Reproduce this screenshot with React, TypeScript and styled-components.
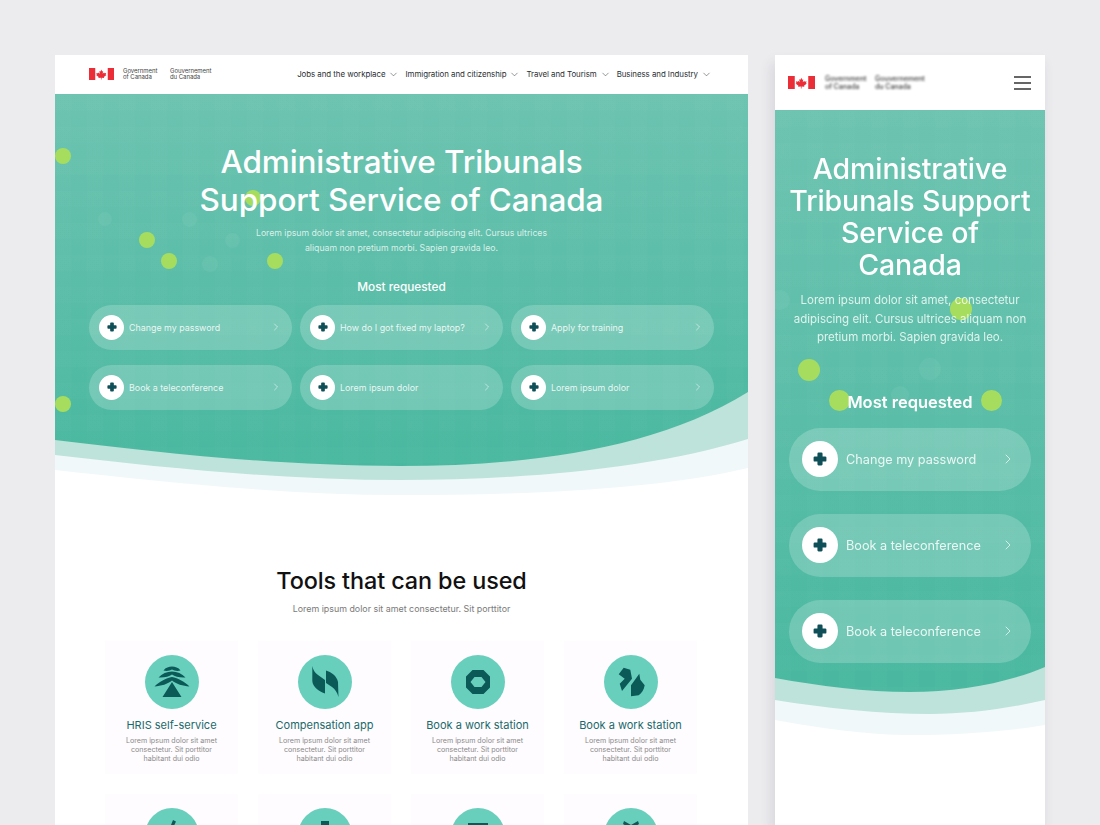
import styled, { createGlobalStyle } from "styled-components";
import { ChevronDown, ChevronRight } from "lucide-react";

const GlobalStyle = createGlobalStyle`
  html, body {
    margin: 0;
    height: 825px;
    overflow: hidden;
    background-color: #ecebee;
    font-family: Inter, "Liberation Sans", sans-serif;
  }
  * {
    box-sizing: border-box;
  }
`;

const Page = styled.div`
  display: flex;
  align-items: flex-start;
  gap: 27px;
  height: 825px;
  padding: 55px 0 0 55px;
  overflow: hidden;
`;

const DesktopFrame = styled.main`
  width: 693px;
  height: 770px;
  flex-shrink: 0;
  background-color: #fff;
  overflow: hidden;
`;

const MobileFrame = styled.aside`
  width: 270px;
  height: 770px;
  flex-shrink: 0;
  background-color: #fff;
  box-shadow: -3px 8px 12px rgba(60, 60, 70, 0.12);
  overflow: hidden;
`;

const Header = styled.header`
  display: flex;
  align-items: center;
  justify-content: space-between;
  height: 39px;
  padding: 0 36px 1px 34px;
  background-color: #fff;
`;

const MobileHeader = styled(Header)`
  height: 55px;
  padding: 0 14px 0 13px;
`;

const Brand = styled.div`
  display: flex;
  align-items: center;
`;

const FlagBox = styled.svg<{ $width: number }>`
  width: ${(p) => p.$width}px;
  height: ${(p) => p.$width / 2}px;
  flex-shrink: 0;
`;

const BrandText = styled.span`
  display: block;
  width: 47px;
  font-size: 6px;
  line-height: 6.4px;
  letter-spacing: -0.05px;
  color: #444;
  &:first-of-type {
    margin-left: 9px;
  }
`;

const MobileBrandText = styled(BrandText)`
  width: 50px;
  font-size: 7px;
  line-height: 8px;
  font-weight: 600;
  color: #555;
  filter: blur(0.8px);
  &:first-of-type {
    margin-left: 10px;
  }
`;

const Nav = styled.nav`
  display: flex;
  align-items: center;
  gap: 6px;
`;

const NavItem = styled.a`
  display: flex;
  align-items: center;
  gap: 3px;
  font-size: 7.9px;
  font-weight: 400;
  letter-spacing: -0.05px;
  color: #2a2f33;
  white-space: nowrap;
`;

const Burger = styled.div`
  display: flex;
  flex-direction: column;
  gap: 4px;
  width: 17px;
`;

const BurgerLine = styled.span`
  display: block;
  height: 2px;
  background-color: #666;
`;

const Hero = styled.section`
  position: relative;
  height: 401px;
  padding-top: 49px;
  text-align: center;
  color: #fff;
  background-color: #5bbca7;
  background-image: repeating-linear-gradient(90deg, rgba(255, 255, 255, 0.012) 0 16px, transparent 16px 32px),
    repeating-linear-gradient(0deg, rgba(255, 255, 255, 0.01) 0 16px, transparent 16px 32px),
    linear-gradient(180deg, #6cc3b0 0%, #4ab8a0 90%);
`;

const MobileHero = styled(Hero)`
  height: 625px;
  padding: 43px 14px 0 14px;
`;

const HeroBody = styled.div`
  position: relative;
  z-index: 2;
`;

const MobileHeroBody = styled(HeroBody)`
  filter: blur(0.55px);
`;

const HeroTitle = styled.h1`
  margin: 0;
  font-size: 31.5px;
  line-height: 38px;
  font-weight: 500;
  letter-spacing: -0.1px;
`;

const MobileHeroTitle = styled(HeroTitle)`
  font-size: 28.5px;
  line-height: 32px;
`;

const HeroText = styled.p`
  margin: 7px 0 0;
  font-size: 8.7px;
  line-height: 15px;
  color: rgba(255, 255, 255, 0.78);
`;

const MobileHeroText = styled(HeroText)`
  margin-top: 10px;
  font-size: 11.5px;
  line-height: 18.5px;
  color: rgba(255, 255, 255, 0.8);
`;

const SectionLabel = styled.h2`
  margin: 23px 0 10px;
  font-size: 11.8px;
  line-height: 16px;
  font-weight: 500;
`;

const MobileSectionLabel = styled(SectionLabel)`
  margin: 44px 0 15px;
  font-size: 16.5px;
  line-height: 22px;
  font-weight: 600;
`;

const PillGrid = styled.div`
  display: grid;
  grid-template-columns: repeat(3, 203px);
  gap: 15.5px 8px;
  padding-left: 34px;
`;

const PillStack = styled.div`
  display: flex;
  flex-direction: column;
  gap: 23px;
`;

const Pill = styled.a`
  display: flex;
  align-items: center;
  height: 44.5px;
  padding: 0 10px 0 10px;
  border-radius: 23px;
  background-color: rgba(255, 255, 255, 0.2);
  text-align: left;
  font-size: 8.9px;
  color: rgba(255, 255, 255, 0.86);
`;

const MobilePill = styled(Pill)`
  height: 63px;
  padding: 0 15px 0 13px;
  border-radius: 32px;
  font-size: 12.7px;
`;

const PillIcon = styled.span`
  display: flex;
  align-items: center;
  justify-content: center;
  width: 25px;
  height: 25px;
  margin-right: 5px;
  border-radius: 50%;
  background-color: #fff;
  flex-shrink: 0;
`;

const MobilePillIcon = styled(PillIcon)`
  width: 36px;
  height: 36px;
  margin-right: 8px;
`;

const PillLabel = styled.span`
  flex: 1;
  white-space: nowrap;
`;

const Dot = styled.span<{ $x: number; $y: number; $size?: number; $ghost?: boolean }>`
  position: absolute;
  left: ${(p) => p.$x - (p.$size ?? 16) / 2}px;
  top: ${(p) => p.$y - (p.$size ?? 16) / 2}px;
  width: ${(p) => p.$size ?? 16}px;
  height: ${(p) => p.$size ?? 16}px;
  border-radius: 50%;
  background-color: ${(p) => (p.$ghost ? "rgba(255, 255, 255, 0.05)" : "#a6dd5e")};
  z-index: 1;
`;

const Wave = styled.svg<{ $height: number }>`
  position: absolute;
  left: 0;
  bottom: 0;
  display: block;
  width: 100%;
  height: ${(p) => p.$height}px;
  z-index: 1;
`;

const Tools = styled.section`
  padding: 71px 50px 0;
  text-align: center;
`;

const ToolsTitle = styled.h2`
  margin: 0;
  font-size: 23.4px;
  line-height: 30px;
  font-weight: 500;
  letter-spacing: -0.1px;
  color: #111;
`;

const ToolsText = styled.p`
  margin: 7px 0 0;
  font-size: 8.9px;
  line-height: 12px;
  color: #7a7a7a;
`;

const ToolGrid = styled.div`
  display: grid;
  grid-template-columns: repeat(4, 133px);
  gap: 20px;
  margin-top: 26px;
`;

const ToolCard = styled.article`
  height: 133px;
  padding-top: 14px;
  background-color: #fefcfe;
`;

const ToolIcon = styled.svg`
  display: block;
  width: 54px;
  height: 54px;
  margin: 0 auto;
`;

const ToolTitle = styled.h3`
  margin: 9px 0 0;
  font-size: 11px;
  line-height: 14px;
  font-weight: 400;
  color: #1a6a6b;
`;

const ToolText = styled.p`
  width: 96px;
  margin: 5px auto 0;
  font-size: 7.1px;
  line-height: 8.8px;
  color: #8a8a8a;
`;

function Flag({ width }: { width: number }) {
  return (
    <FlagBox $width={width} viewBox="0 0 48 24" aria-hidden="true">
      <rect width="48" height="24" fill="#fff" />
      <rect width="12" height="24" fill="#ea2d37" />
      <rect x="36" width="12" height="24" fill="#ea2d37" />
      <path
        fill="#ea2d37"
        d="M24 3l-2 3.6-2.2-1 1 5.6-2.8-2.8-.7 1.6-3.3-.5 1 3.3-1.5.7 5 4-.6 1.8 5-.6V22h1.2v-3.3l5 .6-.6-1.8 5-4-1.5-.7 1-3.3-3.3.5-.7-1.6-2.8 2.8 1-5.6-2.2 1z"
      />
    </FlagBox>
  );
}

function PlusMark({ size }: { size: number }) {
  return (
    <svg width={size} height={size} viewBox="0 0 12 12" aria-hidden="true">
      <path
        fill="#0f5058"
        d="M3.8 1.5Q3.8.5 4.8.5H7.2Q8.2.5 8.2 1.5V3.8H10.5Q11.5 3.8 11.5 4.8V7.2Q11.5 8.2 10.5 8.2H8.2V10.5Q8.2 11.5 7.2 11.5H4.8Q3.8 11.5 3.8 10.5V8.2H1.5Q.5 8.2.5 7.2V4.8Q.5 3.8 1.5 3.8H3.8Z"
      />
    </svg>
  );
}

const ICON_PATHS = [
  "M27 11.500C24 11.500 20.500 12.500 18.500 15.500C22 16.500 25 15.500 27 14.500C29 15.500 32 16.500 35.500 15.500C33.500 12.500 30 11.500 27 11.500ZM27 16.500C22 16.500 17 18.500 13.500 22.500C19 23 24 21.500 27 19.500C30 21.500 35 23 40.500 22.500C37 18.500 32 16.500 27 16.500ZM27 22C21 23 14 27 9.500 31.500C16 31 23 29 27 25.500C31 29 38 31 44.500 31.500C40 27 33 23 27 22ZM27 27L36.500 42H17.500Z",
  "M14.300 11C15 15 17 18 20 20L27 25L27 38.500C22 37 14.500 32 14.300 26ZM28 15.500C33 17 39 21 40 27L40.500 42C39 37 37 34 34 32L28 28Z",
  "M21.500 15L32.500 15L39 21.500L39 32.500L32.500 39L21.500 39L15 32.500L15 21.500ZM23.500 22L19.500 27L23.500 32L30.500 32L34.500 27L30.500 22Z",
  "M19.700 12.700L26.300 14.700L28 23.700L18 36L15.700 28.700L20.700 23.700L14.700 19.300ZM35.300 18.700L36.300 24.700L40.700 30.300C40 35 37.500 38.500 34.700 40.300L27 41.300L27 30.300Z",
  "M28 12L31 13.500L27 22L37 40H17L24 22Z",
  "M23 13H31V22H38V40H16V22H23Z",
  "M17 15H37V19H17ZM20 22H34V40H20Z",
  "M20 13L27 17L34 13L35 16L29 20V26L37 33L33 40H21L17 33L25 26V20L19 16Z",
];

// second row runs off the bottom of the shot, only its icons show
const TOOLS = [
  { title: "HRIS self-service", icon: 0 },
  { title: "Compensation app", icon: 1 },
  { title: "Book a work station", icon: 2 },
  { title: "Book a work station", icon: 3 },
  { icon: 4 },
  { icon: 5 },
  { icon: 6 },
  { icon: 7 },
];

const DESKTOP_LINKS = [
  "Change my password",
  "How do I got fixed my laptop?",
  "Apply for training",
  "Book a teleconference",
  "Lorem ipsum dolor",
  "Lorem ipsum dolor",
];

const MOBILE_LINKS = ["Change my password", "Book a teleconference", "Book a teleconference"];

const NAV_LINKS = ["Jobs and the workplace", "Immigration and citizenship", "Travel and Tourism", "Business and Industry"];

const DESKTOP_DOTS = [
  { x: 8, y: 62 },
  { x: 198, y: 104 },
  { x: 92, y: 146 },
  { x: 114, y: 167 },
  { x: 220, y: 167 },
  { x: 8, y: 310 },
];

const DESKTOP_GHOSTS = [
  { x: 134, y: 125, size: 15 },
  { x: 177, y: 146, size: 15 },
  { x: 50, y: 125, size: 14 },
  { x: 155, y: 170, size: 16 },
];

const MOBILE_DOTS = [
  { x: 186, y: 199, size: 22 },
  { x: 34, y: 260, size: 22 },
  { x: 64, y: 290, size: 21 },
  { x: 216, y: 290, size: 21 },
];

const MOBILE_GHOSTS = [
  { x: 155, y: 259, size: 22 },
  { x: 5, y: 190, size: 20 },
  { x: 125, y: 285, size: 18 },
];

function App() {
  return (
    <>
      <GlobalStyle />
      <Page>
        <DesktopFrame>
          <Header>
            <Brand>
              <Flag width={25} />
              <BrandText>
                Government
                <br />
                of Canada
              </BrandText>
              <BrandText>
                Gouvernement
                <br />
                du Canada
              </BrandText>
            </Brand>
            <Nav>
              {NAV_LINKS.map((link) => (
                <NavItem key={link}>
                  {link}
                  <ChevronDown size={11} strokeWidth={1.1} />
                </NavItem>
              ))}
            </Nav>
          </Header>

          <Hero>
            {DESKTOP_GHOSTS.map((d) => (
              <Dot key={`${d.x}-${d.y}`} $x={d.x} $y={d.y} $size={d.size} $ghost />
            ))}
            {DESKTOP_DOTS.map((d) => (
              <Dot key={`${d.x}-${d.y}`} $x={d.x} $y={d.y} />
            ))}
            <HeroBody>
              <HeroTitle>
                Administrative Tribunals
                <br />
                Support Service of Canada
              </HeroTitle>
              <HeroText>
                Lorem ipsum dolor sit amet, consectetur adipiscing elit. Cursus ultrices
                <br />
                aliquam non pretium morbi. Sapien gravida leo.
              </HeroText>
              <SectionLabel>Most requested</SectionLabel>
              <PillGrid>
                {DESKTOP_LINKS.map((link, i) => (
                  <Pill key={i}>
                    <PillIcon>
                      <PlusMark size={10} />
                    </PillIcon>
                    <PillLabel>{link}</PillLabel>
                    <ChevronRight size={12} strokeWidth={1.2} />
                  </Pill>
                ))}
              </PillGrid>
            </HeroBody>
            <Wave $height={105} viewBox="0 0 693 105" preserveAspectRatio="none" aria-hidden="true">
              <path fill="#bde3da" d="M0 50C100 62 220 76 345 76C470 76 600 60 693 2V105H0Z" />
              <path fill="#f1f8fa" d="M0 65C110 78 230 90 345 90C470 90 600 78 693 49V105H0Z" />
              <path fill="#fff" d="M0 80C110 92 230 105 345 105C470 105 600 100 693 78V105H0Z" />
            </Wave>
          </Hero>

          <Tools>
            <ToolsTitle>Tools that can be used</ToolsTitle>
            <ToolsText>Lorem ipsum dolor sit amet consectetur. Sit porttitor</ToolsText>
            <ToolGrid>
              {TOOLS.map((tool, i) => (
                <ToolCard key={i}>
                  <ToolIcon viewBox="0 0 54 54" aria-hidden="true">
                    <circle cx="27" cy="27" r="27" fill="#69cfbd" />
                    <path fill="#0b5a58" fillRule="evenodd" d={ICON_PATHS[tool.icon]} />
                  </ToolIcon>
                  {tool.title && (
                    <>
                      <ToolTitle>{tool.title}</ToolTitle>
                      <ToolText>Lorem ipsum dolor sit amet consectetur. Sit porttitor habitant dui odio</ToolText>
                    </>
                  )}
                </ToolCard>
              ))}
            </ToolGrid>
          </Tools>
        </DesktopFrame>

        <MobileFrame>
          <MobileHeader>
            <Brand>
              <Flag width={27} />
              <MobileBrandText>
                Government
                <br />
                of Canada
              </MobileBrandText>
              <MobileBrandText>
                Gouvernement
                <br />
                du Canada
              </MobileBrandText>
            </Brand>
            <Burger>
              <BurgerLine />
              <BurgerLine />
              <BurgerLine />
            </Burger>
          </MobileHeader>

          <MobileHero>
            {MOBILE_GHOSTS.map((d) => (
              <Dot key={`${d.x}-${d.y}`} $x={d.x} $y={d.y} $size={d.size} $ghost />
            ))}
            {MOBILE_DOTS.map((d) => (
              <Dot key={`${d.x}-${d.y}`} $x={d.x} $y={d.y} $size={d.size} />
            ))}
            <MobileHeroBody>
              <MobileHeroTitle>Administrative Tribunals Support Service of Canada</MobileHeroTitle>
              <MobileHeroText>
                Lorem ipsum dolor sit amet, consectetur adipiscing elit. Cursus ultrices aliquam non pretium morbi. Sapien
                gravida leo.
              </MobileHeroText>
              <MobileSectionLabel>Most requested</MobileSectionLabel>
              <PillStack>
                {MOBILE_LINKS.map((link, i) => (
                  <MobilePill key={i}>
                    <MobilePillIcon>
                      <PlusMark size={14} />
                    </MobilePillIcon>
                    <PillLabel>{link}</PillLabel>
                    <ChevronRight size={16} strokeWidth={1.2} />
                  </MobilePill>
                ))}
              </PillStack>
            </MobileHeroBody>
            <Wave $height={68} viewBox="0 0 270 68" preserveAspectRatio="none" aria-hidden="true">
              <path fill="#bde3da" d="M0 11C45 19 90 25 135 25C185 25 235 15 270 0V68H0Z" />
              <path fill="#f1f8fa" d="M0 33C50 41 105 47 155 47C195 47 235 41 270 33V68H0Z" />
              <path fill="#fff" d="M0 53C45 61 90 68 135 68C185 68 235 64 270 58V68H0Z" />
            </Wave>
          </MobileHero>
        </MobileFrame>
      </Page>
    </>
  );
}

export default App;
